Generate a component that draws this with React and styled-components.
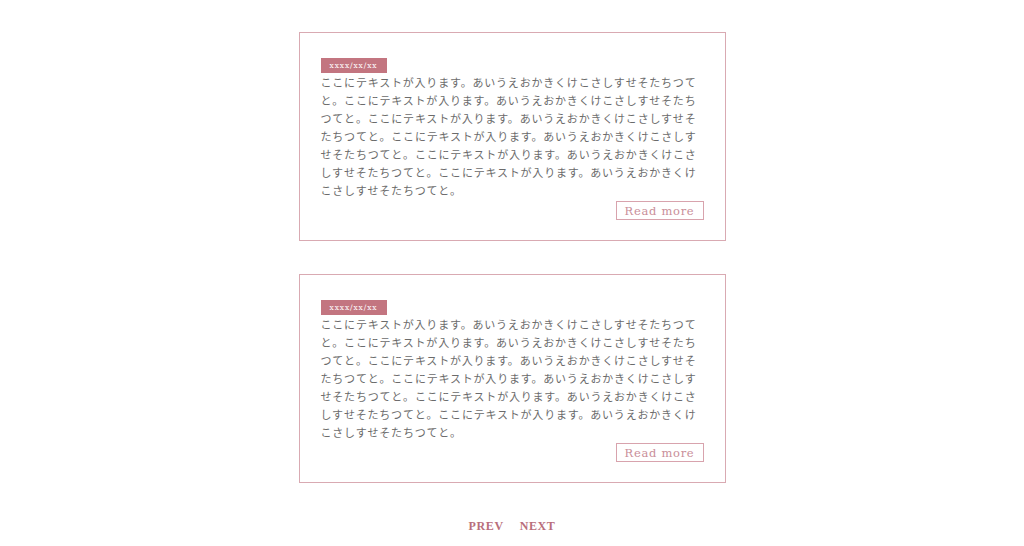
import React from 'react'
import styled, { createGlobalStyle } from 'styled-components'

const GlobalStyle = createGlobalStyle`
  body {
    margin: 0;
    background: #ffffff;
  }
`

const Page = styled.main`
  display: flex;
  flex-direction: column;
  align-items: center;
  padding-top: 32px;
`

const PostList = styled.div`
  display: flex;
  flex-direction: column;
  gap: 33px;
`

const Card = styled.article`
  width: 427px;
  box-sizing: border-box;
  border: 1px solid #d9aab2;
  padding: 25px 21px 20px 21px;
  display: flex;
  flex-direction: column;
  align-items: flex-start;
`

const DateTag = styled.span`
  display: inline-flex;
  align-items: center;
  justify-content: center;
  width: 66px;
  height: 15px;
  background: #c37580;
  color: #ffffff;
  font-family: "DejaVu Serif", serif;
  font-size: 7.5px;
  letter-spacing: 0.9px;
`

const Body = styled.p`
  margin: 0;
  font-family: "Noto Sans CJK JP", sans-serif;
  font-size: 11px;
  letter-spacing: 0.8px;
  line-height: 18px;
  color: #6b6b6b;
`

const ReadMore = styled.a`
  align-self: flex-end;
  margin-top: 2px;
  width: 88px;
  height: 19px;
  box-sizing: border-box;
  border: 1px solid #d8a3ad;
  display: flex;
  align-items: center;
  justify-content: center;
  font-family: "DejaVu Serif", serif;
  font-size: 11.5px;
  letter-spacing: 0.7px;
  color: #c98e99;
  text-decoration: none;
`

const Pager = styled.nav`
  display: flex;
  gap: 16px;
  margin-top: 36px;
`

const PagerLink = styled.a`
  font-family: "Liberation Serif", serif;
  font-weight: bold;
  font-size: 12px;
  letter-spacing: 0.6px;
  color: #b96e7b;
  text-decoration: none;
`

const sentence = 'ここにテキストが入ります。あいうえおかきくけこさしすせそたちつてと。'

const posts = [
  { id: 1, date: 'xxxx/xx/xx', body: sentence.repeat(6) },
  { id: 2, date: 'xxxx/xx/xx', body: sentence.repeat(6) },
]

export default function App() {
  return (
    <>
      <GlobalStyle />
      <Page>
        <PostList>
          {posts.map((p) => (
            <Card key={p.id}>
              <DateTag>{p.date}</DateTag>
              <Body>{p.body}</Body>
              <ReadMore href="#">Read more</ReadMore>
            </Card>
          ))}
        </PostList>
        <Pager>
          <PagerLink href="#">PREV</PagerLink>
          <PagerLink href="#">NEXT</PagerLink>
        </Pager>
      </Page>
    </>
  )
}
